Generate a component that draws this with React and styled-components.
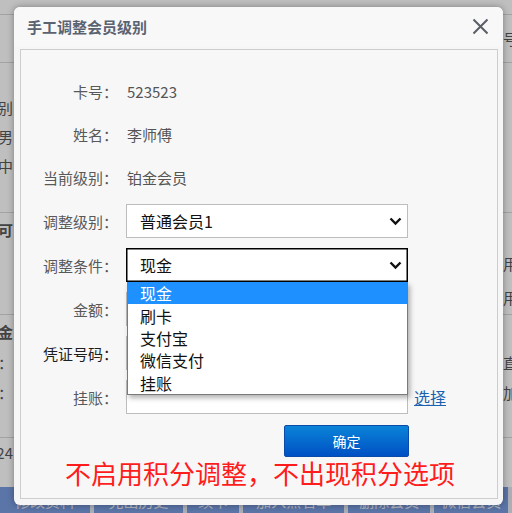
import React from 'react';
import styled, { createGlobalStyle } from 'styled-components';

const GlobalStyle = createGlobalStyle`
  html, body { margin: 0; padding: 0; }
  body {
    width: 512px; height: 513px; overflow: hidden;
    font-family: "Noto Sans CJK SC", "Noto Sans", sans-serif;
  }
`;

const Screen = styled.div`
  position: relative;
  width: 512px;
  height: 513px;
  overflow: hidden;
  background: #ffffff;
  display: flex;
  flex-direction: column;
`;

const BgRow = styled.div`
  display: flex;
  align-items: center;
  height: ${p => p.$h}px;
  box-sizing: border-box;
  border-bottom: ${p => (p.$line ? '1px solid #dadada' : 'none')};
  font-size: 15px;
  line-height: 20px;
  color: #5a5a5a;
  font-weight: ${p => (p.$bold ? 700 : 400)};
`;

const BgLeft = styled.div`
  width: 14px;
  flex-shrink: 0;
  display: flex;
  justify-content: flex-end;
  overflow: hidden;
  white-space: nowrap;
  padding-right: 1px;
  box-sizing: border-box;
`;

const BgMid = styled.div`
  flex: 1;
`;

const BgRight = styled.div`
  width: 9px;
  flex-shrink: 0;
  display: flex;
  justify-content: flex-start;
  overflow: hidden;
  white-space: nowrap;
`;

const BottomBar = styled.div`
  margin-top: auto;
  height: 26px;
  background: #7a9ce0;
  display: flex;
  align-items: center;
  font-size: 15px;
  color: #eef2ff;
`;

const BarButton = styled.div`
  width: ${p => p.$w}px;
  height: 26px;
  display: flex;
  align-items: center;
  justify-content: center;
  white-space: nowrap;
  overflow: hidden;
  border-right: 4px solid #e4e8f0;
  box-sizing: border-box;
`;

const Overlay = styled.div`
  position: absolute;
  inset: 0;
  background: rgba(0, 0, 0, 0.25);
`;

const Dialog = styled.div`
  position: absolute;
  left: 14px;
  top: 7px;
  width: 489px;
  height: 498px;
  background: #f6f6f6;
  border-radius: 6px;
  box-shadow: 0 0 7px rgba(0, 0, 0, 0.35);
  display: flex;
  flex-direction: column;
`;

const Header = styled.div`
  height: 39px;
  flex-shrink: 0;
  display: flex;
  align-items: center;
  justify-content: space-between;
  padding: 0 14px 0 13px;
  background: #f8f8f9;
  border-radius: 6px 6px 0 0;
`;

const Title = styled.div`
  font-size: 15px;
  font-weight: 700;
  color: #5c6370;
  line-height: 20px;
`;

const CloseButton = styled.div`
  width: 18px;
  height: 18px;
  display: flex;
  align-items: center;
  justify-content: center;
`;

const Panel = styled.div`
  margin: 3px 5px 0 6px;
  height: 450px;
  box-sizing: border-box;
  border: 1px solid #cdcdcd;
  background: #f7f7f7;
  padding-top: 25px;
  display: flex;
  flex-direction: column;
`;

const Form = styled.div`
  display: grid;
  grid-template-columns: 97px 282px auto;
  column-gap: 8px;
  row-gap: 10px;
  align-items: center;
`;

const Label = styled.div`
  height: ${p => (p.$tall ? 34 : 33)}px;
  display: flex;
  align-items: center;
  justify-content: flex-end;
  font-size: 15px;
  color: ${p => (p.$dark ? '#1e1e1e' : '#595959')};
  white-space: nowrap;
`;

const Value = styled.div`
  height: 33px;
  display: flex;
  align-items: center;
  font-size: 15px;
  color: #555555;
  padding-left: 1px;
`;

const SelectWrap = styled.div`
  position: relative;
  height: 34px;
`;

const SelectBox = styled.div`
  height: 34px;
  box-sizing: border-box;
  background: #ffffff;
  border: 1px solid ${p => (p.$focused ? '#000000' : '#bdbdbd')};
  box-shadow: ${p => (p.$focused ? 'inset 0 0 0 0.5px #000' : 'none')};
  display: flex;
  align-items: center;
  justify-content: space-between;
  padding: 0 5px 0 13px;
  font-size: 16px;
  color: #111111;
`;

const TextInput = styled.div`
  height: 34px;
  box-sizing: border-box;
  background: #ffffff;
  border: 1px solid #bdbdbd;
`;

const Empty = styled.div``;

const LinkText = styled.a`
  font-size: 16px;
  color: #1a62b0;
  text-decoration: underline;
  margin-left: -2px;
  cursor: pointer;
`;

const OptionList = styled.div`
  position: absolute;
  top: 34px;
  left: 1px;
  width: 281px;
  box-sizing: border-box;
  background: #ffffff;
  border: 1px solid #7a7a7a;
  border-top: none;
  box-shadow: 2px 3px 5px rgba(0, 0, 0, 0.3);
  z-index: 2;
`;

const Option = styled.div`
  height: 22.4px;
  display: flex;
  align-items: center;
  padding-left: 12px;
  font-size: 16px;
  color: ${p => (p.$active ? '#ffffff' : '#111111')};
  background: ${p => (p.$active ? '#1e90ff' : 'transparent')};
`;

const ButtonCell = styled.div`
  grid-column: 2;
  display: flex;
  justify-content: flex-end;
  margin-top: 1px;
`;

const ConfirmButton = styled.button`
  width: 125px;
  height: 32px;
  border: 1px solid #0a4aa8;
  border-radius: 2px;
  background: linear-gradient(#0a84d8, #0050c4);
  color: #ffffff;
  font-family: "Noto Sans CJK SC", "Noto Sans", sans-serif;
  font-size: 14px;
  padding: 0;
  margin-right: -1px;
`;

const Annotation = styled.div`
  text-align: center;
  font-size: 26px;
  line-height: 30px;
  color: #ff1c1c;
  margin-top: 1px;
  padding-left: 2px;
`;

const Chevron = () => (
  <svg width="13" height="9" viewBox="0 0 13 9">
    <path d="M1.5 1.5 L6.5 6.5 L11.5 1.5" fill="none" stroke="#111" strokeWidth="2.4" />
  </svg>
);

const CloseIcon = () => (
  <svg width="17" height="17" viewBox="0 0 17 17">
    <path d="M1.5 1.5 L15.5 15.5 M15.5 1.5 L1.5 15.5" stroke="#5a5e66" strokeWidth="2" fill="none" />
  </svg>
);

const bgRows = [
  { h: 15, line: true },
  { h: 48, line: true, right: '号' },
  { h: 30 },
  { h: 29, left: '级别' },
  { h: 29, left: '性别男' },
  { h: 29, left: '中' },
  { h: 33, line: true },
  { h: 33, left: '不可', bold: true },
  { h: 35, right: '用' },
  { h: 34, right: '用', line: true },
  { h: 33, left: '直金', bold: true },
  { h: 30, left: '：', right: '直' },
  { h: 30, left: '：', right: '加' },
  { h: 30, line: true },
  { h: 30, left: '24' },
];

const barButtons = [
  { w: 97, t: '修改资料' },
  { w: 96, t: '兑出历史' },
  { w: 58, t: '续卡' },
  { w: 108, t: '加入黑名单' },
  { w: 89, t: '删除会员' },
  { w: 80, t: '微信会员' },
];

const options = ['现金', '刷卡', '支付宝', '微信支付', '挂账'];

export default function App() {
  return (
    <>
      <GlobalStyle />
      <Screen>
        {bgRows.map((r, i) => (
          <BgRow key={i} $h={r.h} $line={r.line} $bold={r.bold}>
            <BgLeft>{r.left || ''}</BgLeft>
            <BgMid />
            <BgRight>{r.right || ''}</BgRight>
          </BgRow>
        ))}
        <BottomBar>
          {barButtons.map(b => (
            <BarButton key={b.t} $w={b.w}>{b.t}</BarButton>
          ))}
        </BottomBar>
        <Overlay />
        <Dialog>
          <Header>
            <Title>手工调整会员级别</Title>
            <CloseButton>
              <CloseIcon />
            </CloseButton>
          </Header>
          <Panel>
            <Form>
              <Label>卡号：</Label>
              <Value>523523</Value>
              <Empty />

              <Label>姓名：</Label>
              <Value>李师傅</Value>
              <Empty />

              <Label>当前级别：</Label>
              <Value>铂金会员</Value>
              <Empty />

              <Label $tall>调整级别：</Label>
              <SelectWrap>
                <SelectBox>
                  <span>普通会员1</span>
                  <Chevron />
                </SelectBox>
              </SelectWrap>
              <Empty />

              <Label $tall>调整条件：</Label>
              <SelectWrap>
                <SelectBox $focused>
                  <span>现金</span>
                  <Chevron />
                </SelectBox>
                <OptionList>
                  {options.map((o, i) => (
                    <Option key={o} $active={i === 0}>{o}</Option>
                  ))}
                </OptionList>
              </SelectWrap>
              <Empty />

              <Label $tall>金额：</Label>
              <TextInput />
              <Empty />

              <Label $tall $dark>凭证号码：</Label>
              <TextInput />
              <Empty />

              <Label $tall>挂账：</Label>
              <TextInput />
              <LinkText>选择</LinkText>

              <ButtonCell>
                <ConfirmButton>确定</ConfirmButton>
              </ButtonCell>
            </Form>
            <Annotation>不启用积分调整，不出现积分选项</Annotation>
          </Panel>
        </Dialog>
      </Screen>
    </>
  );
}
